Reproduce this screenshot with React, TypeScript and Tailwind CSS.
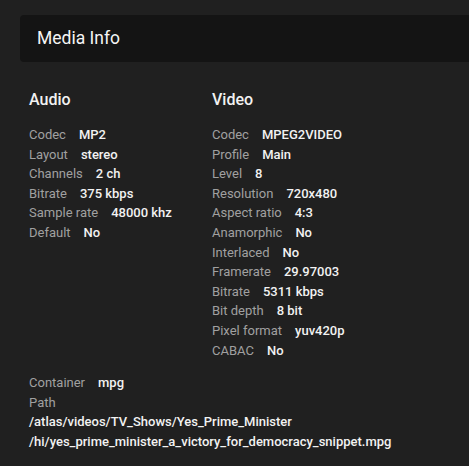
const audio: [string, string][] = [
  ['Codec', 'MP2'],
  ['Layout', 'stereo'],
  ['Channels', '2 ch'],
  ['Bitrate', '375 kbps'],
  ['Sample rate', '48000 khz'],
  ['Default', 'No'],
];

const video: [string, string][] = [
  ['Codec', 'MPEG2VIDEO'],
  ['Profile', 'Main'],
  ['Level', '8'],
  ['Resolution', '720x480'],
  ['Aspect ratio', '4:3'],
  ['Anamorphic', 'No'],
  ['Interlaced', 'No'],
  ['Framerate', '29.97003'],
  ['Bitrate', '5311 kbps'],
  ['Bit depth', '8 bit'],
  ['Pixel format', 'yuv420p'],
  ['CABAC', 'No'],
];

function Row({ label, value }: { label: string; value: string }) {
  return (
    <div className="whitespace-nowrap">
      <span className="text-[#a0a0a0] mr-[13px]">{label}</span>
      <span className="text-[#f2f2f2] font-medium">{value}</span>
    </div>
  );
}

function Stream({ title, rows }: { title: string; rows: [string, string][] }) {
  return (
    <div>
      <h2 className="text-[16px] leading-[20px] font-medium text-[#f2f2f2] mb-[15px]">{title}</h2>
      {rows.map(([l, v]) => (
        <Row key={l} label={l} value={v} />
      ))}
    </div>
  );
}

export default function App() {
  return (
    <div
      className="min-h-[466px] bg-[#202020] pt-[15px] pb-6 text-[13px] leading-[19.6px]"
      style={{ fontFamily: 'Roboto, "Noto Sans", sans-serif' }}
    >
      <div className="ml-[20px] h-[47px] bg-[#141414] rounded-l-[4px] flex items-center pl-[17px]">
        <h1 className="text-[17.5px] text-[#f5f5f5]">Media Info</h1>
      </div>

      <div className="pl-[29px] pt-[28px]">
        <div className="grid grid-cols-[183px_1fr]">
          <Stream title="Audio" rows={audio} />
          <Stream title="Video" rows={video} />
        </div>

        <div className="mt-[13px]">
          <Row label="Container" value="mpg" />
          <div className="text-[#a0a0a0]">Path</div>
          <div className="text-[#f2f2f2] font-medium">
            <div>/atlas/videos/TV_Shows/Yes_Prime_Minister</div>
            <div>/hi/yes_prime_minister_a_victory_for_democracy_snippet.mpg</div>
          </div>
        </div>
      </div>
    </div>
  );
}
